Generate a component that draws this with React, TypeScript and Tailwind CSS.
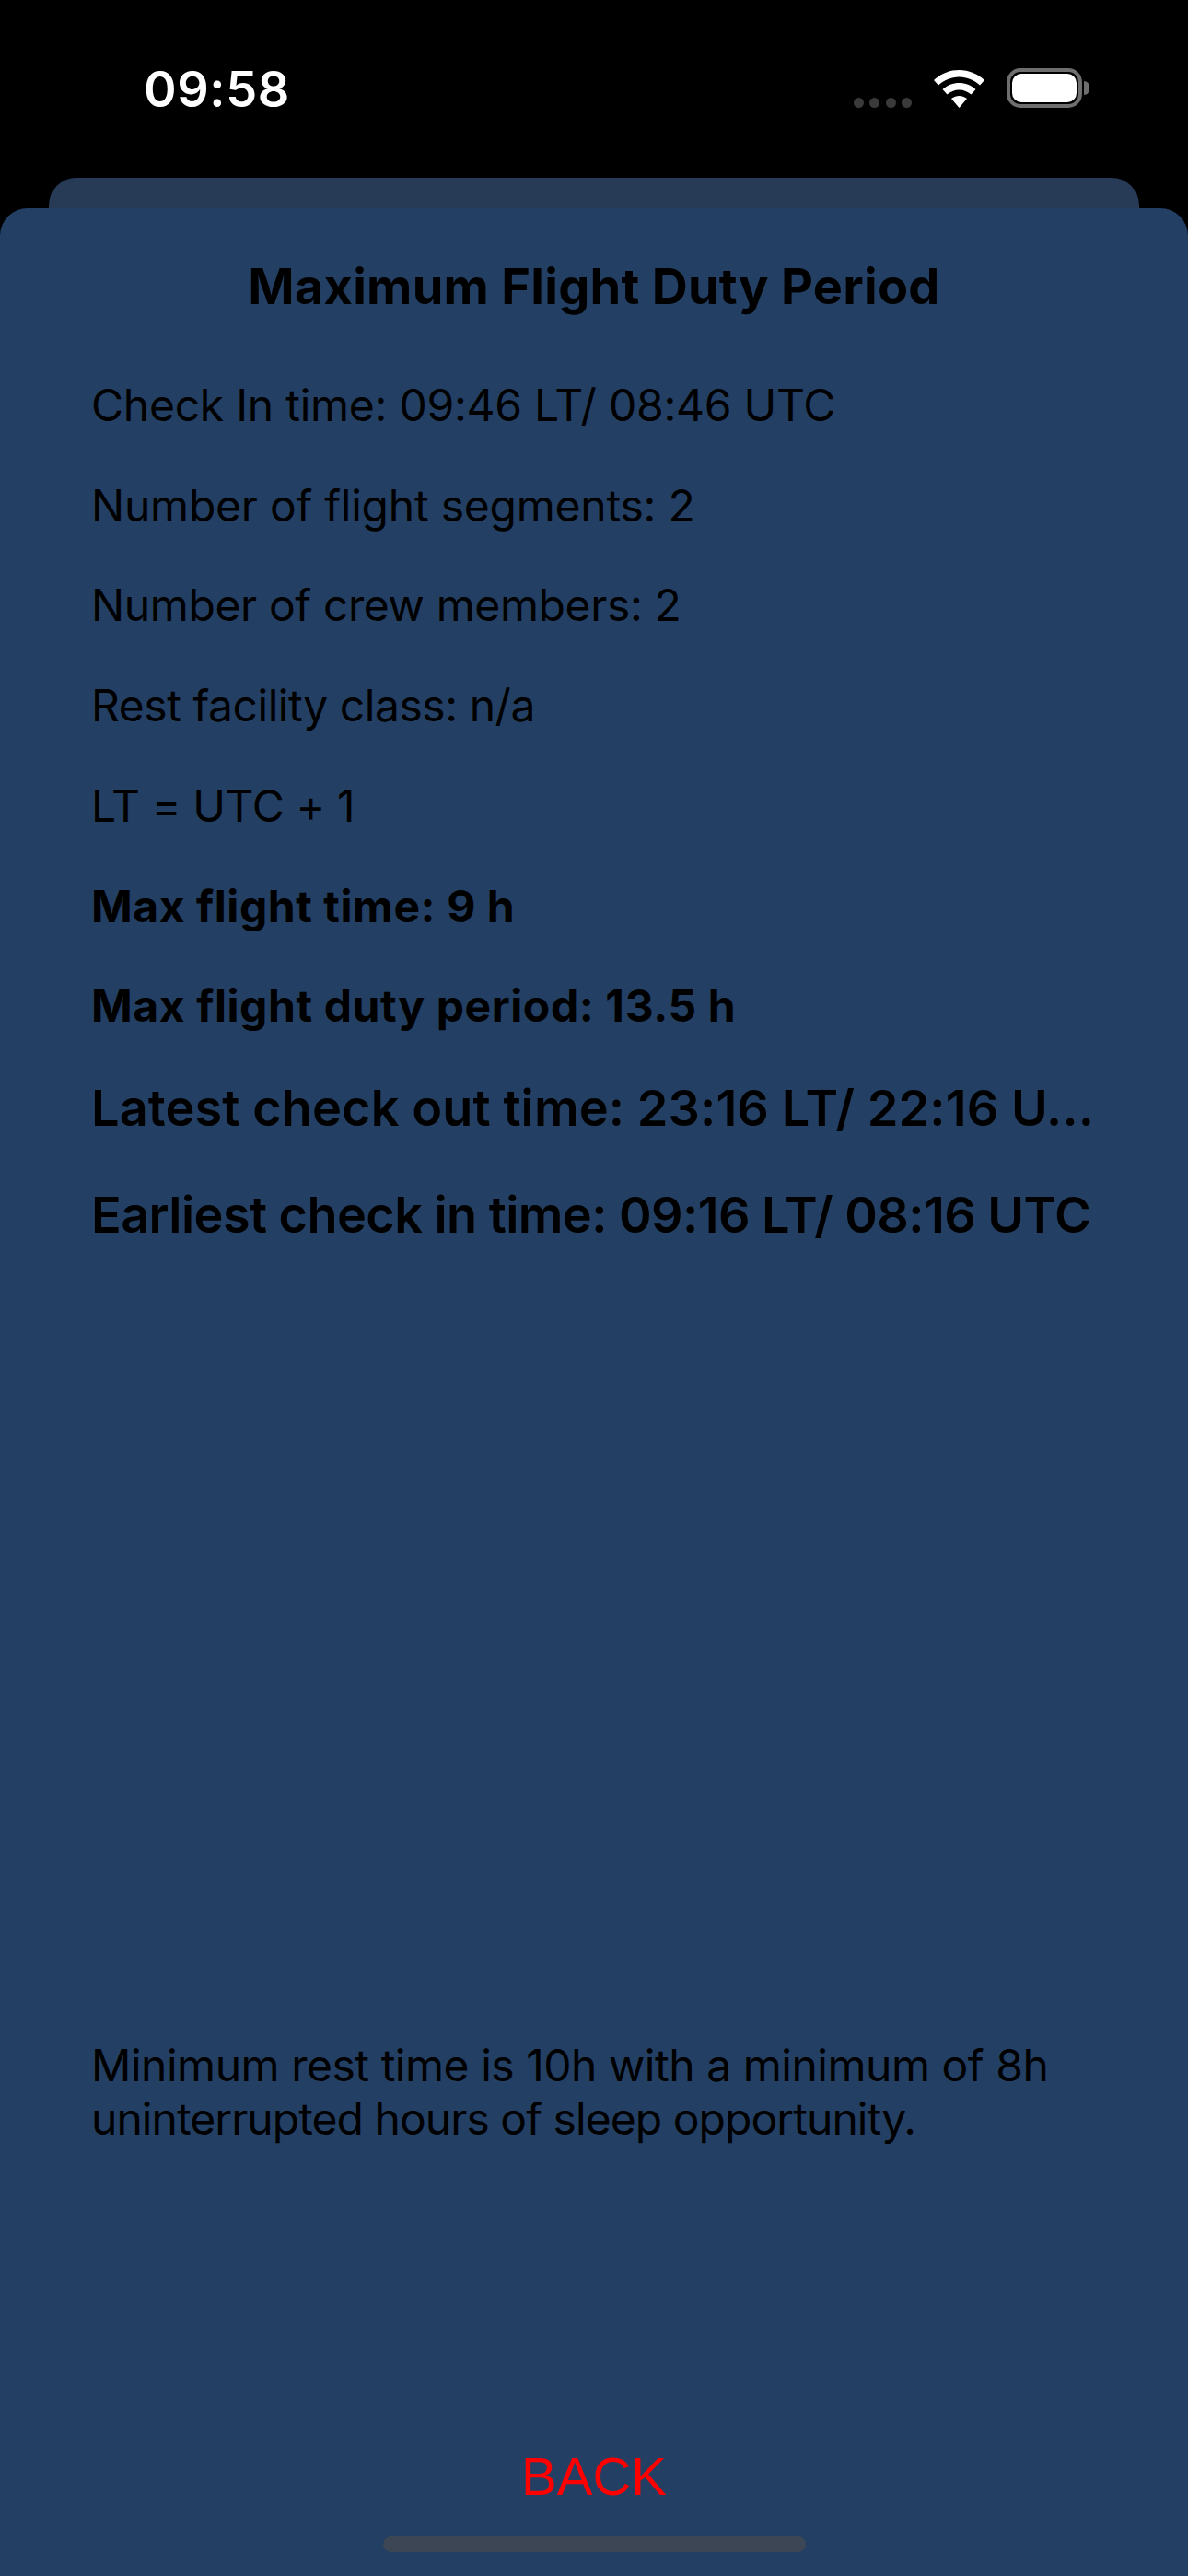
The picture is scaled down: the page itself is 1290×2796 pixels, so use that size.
const rows = [
  { text: 'Check In time: 09:46 LT/ 08:46 UTC', className: 'tracking-[-0.25px]' },
  { text: 'Number of flight segments: 2', className: 'tracking-[-0.23px]' },
  { text: 'Number of crew members: 2', className: 'tracking-[-0.37px]' },
  { text: 'Rest facility class: n/a', className: 'tracking-[-0.45px]' },
  { text: 'LT = UTC + 1', className: 'tracking-[-0.4px]' },
];

function StatusBar() {
  return (
    <div className="relative h-[193px] shrink-0 flex items-start justify-between pl-[156px] pr-[107px] pt-[64px]">
      <span className="text-[54px] leading-[66px] font-semibold text-white tracking-[0.6px]">09:58</span>
      <div className="flex items-end gap-[24px] pt-[10px]">
        {/* Signal */}
        <div className="flex gap-[6.5px]">
          <div className="w-[11px] h-[11px] rounded-full bg-[#3a3a3a]" />
          <div className="w-[11px] h-[11px] rounded-full bg-[#3a3a3a]" />
          <div className="w-[11px] h-[11px] rounded-full bg-[#3a3a3a]" />
          <div className="w-[11px] h-[11px] rounded-full bg-[#3a3a3a]" />
        </div>
        {/* Wifi */}
        <svg width="55" height="41" viewBox="0 0 55 41" fill="white">
          <path d="M27.5 0C17 0 7.500 4 0 11L5 16.500C11 11 19 7.500 27.500 7.500C36 7.500 44 11 50 16.500L55 11C47.500 4 38 0 27.500 0Z" />
          <path d="M27.500 14C21 14 14.500 16.500 9.500 21L14.500 26.500C18 23.500 22.500 21.500 27.500 21.500C32.500 21.500 37 23.500 40.500 26.500L45.500 21C40.500 16.500 34 14 27.500 14Z" />
          <path d="M27.500 28C25 28 21.500 29 19 31L27.500 41L36 31C33.500 29 30 28 27.500 28Z" />
        </svg>
        {/* Battery */}
        <div className="flex items-center">
          <div className="w-[82px] h-[43px] rounded-[15px] border-[4px] border-[#6e6e6e] p-[2px]">
            <div className="w-full h-full rounded-[10px] bg-white" />
          </div>
          <div className="w-[6px] h-[15px] ml-[2px] rounded-r-full bg-[#6e6e6e]" />
        </div>
      </div>
    </div>
  );
}

export default function App() {
  return (
    <div
      className="w-[1290px] h-[2796px] bg-black flex flex-col overflow-hidden"
      style={{ fontFamily: 'Inter, "Liberation Sans", sans-serif' }}
    >
      <StatusBar />
      <div className="mx-[53px] h-[33px] shrink-0 rounded-t-[30px] bg-[#273b57]" />
      <div className="relative flex-1 rounded-t-[30px] bg-[#233f63] flex flex-col text-black">
        <h1 className="mt-[52px] text-center text-[54px] leading-[66px] font-bold tracking-[0.3px]">
          Maximum Flight Duty Period
        </h1>
        <div className="mt-[67px] pl-[99px] pr-[100px] flex flex-col gap-[50px]">
          {rows.map((row) => (
            <p key={row.text} className={`text-[48px] leading-[58.7px] ${row.className}`}>
              {row.text}
            </p>
          ))}
          <p className="text-[48px] leading-[58.7px] font-bold tracking-[0.57px]">Max flight time: 9 h</p>
          <p className="text-[48px] leading-[58.7px] font-bold tracking-[0.6px]">Max flight duty period: 13.5 h</p>
        </div>
        <div className="mt-[48px] pl-[99px] pr-[44px] flex flex-col gap-[50px]">
          <p className="text-[54px] leading-[66px] font-semibold tracking-[0.13px] whitespace-nowrap">
            Latest check out time: 23:16 LT/ 22:16 U...
          </p>
          <p className="text-[54px] leading-[66px] font-semibold tracking-[-0.55px] whitespace-nowrap">
            Earliest check in time: 09:16 LT/ 08:16 UTC
          </p>
        </div>
        <p className="mt-[861px] pl-[99px] pr-[60px] text-[48px] leading-[58px]">
          <span className="block tracking-[-0.47px]">Minimum rest time is 10h with a minimum of 8h</span>
          <span className="block tracking-[-0.94px]">uninterrupted hours of sleep opportunity.</span>
        </p>
        <button
          className="mt-auto mb-[72px] self-center text-[58px] leading-[72px] text-[#ff0000]"
          style={{ fontFamily: '"Liberation Sans", sans-serif' }}
        >
          BACK
        </button>
        <div className="absolute left-[416px] top-[2527px] w-[459px] h-[17px] rounded-full bg-[#3d4654]" />
      </div>
    </div>
  );
}
